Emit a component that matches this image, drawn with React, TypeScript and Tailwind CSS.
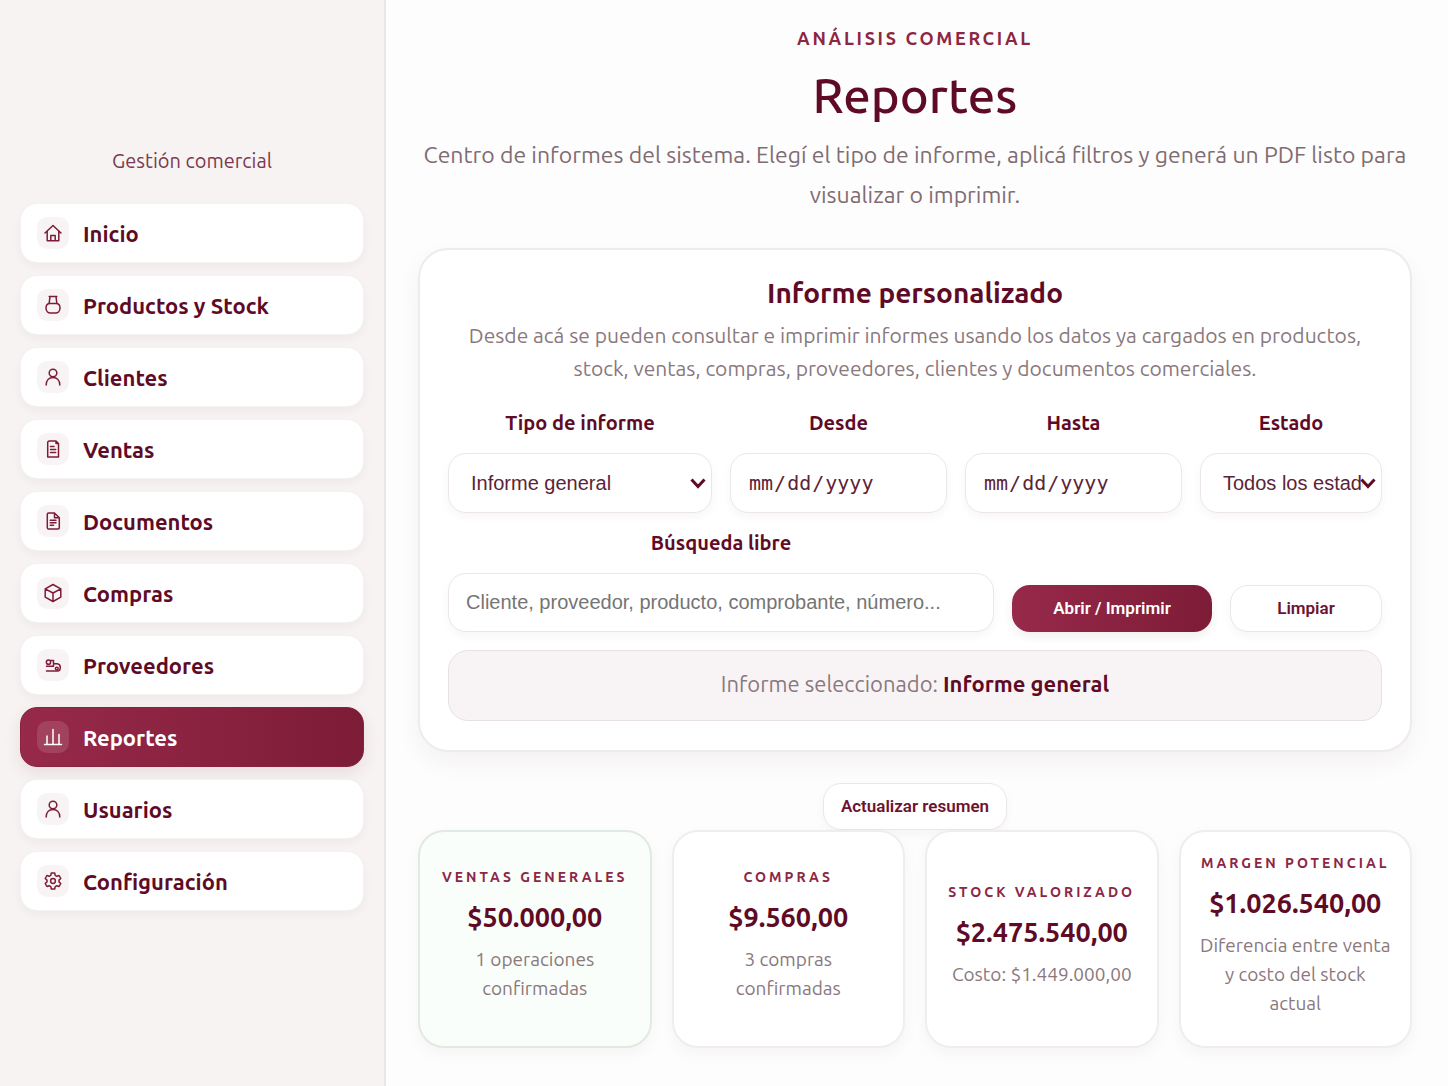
import { useState } from 'react';
import type { ReactNode } from 'react';

const fieldClass =
  'w-full rounded-[18px] border border-[#ece6e8] bg-white shadow-[0_4px_10px_rgba(70,20,35,0.04)] outline-none focus:border-[#8d2643]';

const stats = [
  { label: 'Ventas generales', value: '$50.000,00', note: '1 operaciones confirmadas', highlight: true },
  { label: 'Compras', value: '$9.560,00', note: '3 compras confirmadas' },
  { label: 'Stock valorizado', value: '$2.475.540,00', note: 'Costo: $1.449.000,00' },
  { label: 'Margen potencial', value: '$1.026.540,00', note: 'Diferencia entre venta y costo del stock actual' },
];

const navItems = [
  { label: 'Inicio', icon: <HomeIcon /> },
  { label: 'Productos y Stock', icon: <FlaskIcon /> },
  { label: 'Clientes', icon: <UserIcon /> },
  { label: 'Ventas', icon: <ReceiptIcon /> },
  { label: 'Documentos', icon: <DocumentIcon /> },
  { label: 'Compras', icon: <BoxIcon /> },
  { label: 'Proveedores', icon: <TruckIcon /> },
  { label: 'Reportes', icon: <ChartIcon /> },
  { label: 'Usuarios', icon: <UserIcon /> },
  { label: 'Configuración', icon: <GearIcon /> },
];

function App() {
  return (
    <div className="flex min-h-screen bg-[#fdfdfd] font-['Ubuntu','Noto_Sans',sans-serif] text-[#5f0b26]">
      <Sidebar active="Reportes" />
      <main className="min-w-0 flex-1 pt-6 pr-9 pb-9 pl-8">
        <header className="text-center">
          <p className="text-lg leading-7 font-semibold tracking-[0.15em] text-[#8d2643] uppercase">
            Análisis comercial
          </p>
          <h1 className="mt-[7px] text-[49px] leading-[72px] font-medium">Reportes</h1>
          <p className="mt-1 text-[23px] leading-10 font-normal text-[#7f6c72]">
            Centro de informes del sistema. Elegí el tipo de informe, aplicá filtros y generá un PDF listo para
            visualizar o imprimir.
          </p>
        </header>
        <ReportForm />
        <div className="mt-[31px] flex justify-center">
          <button
            type="button"
            className="h-[47px] rounded-[18px] border border-[#ece6e8] bg-white px-[17px] font-['Liberation_Sans_Narrow','Roboto',sans-serif] text-[17px] font-semibold text-[#6d1330] shadow-[0_4px_10px_rgba(70,20,35,0.04)]"
          >
            Actualizar resumen
          </button>
        </div>
        <section className="grid grid-cols-4 gap-5">
          {stats.map((stat) => (
            <StatCard key={stat.label} {...stat} />
          ))}
        </section>
      </main>
    </div>
  );
}

function Sidebar({ active }: { active: string }) {
  return (
    <aside className="w-[386px] shrink-0 border-r-2 border-[#ebe6e8] bg-[#f7f3f3] px-5 pt-[146px]">
      <p className="text-center text-xl leading-[30px] font-normal text-[#7a3a4e]">Gestión comercial</p>
      <nav className="mt-[27px] flex flex-col gap-3">
        {navItems.map((item) => {
          const isActive = item.label === active;
          return (
            <a
              key={item.label}
              href="#"
              aria-current={isActive ? 'page' : undefined}
              className={`flex h-[60px] items-center gap-[14px] rounded-[17px] border px-4 text-[22px] font-bold ${
                isActive
                  ? 'border-[#862340] bg-linear-to-r from-[#97294a] to-[#7d1c37] text-white shadow-[0_6px_16px_rgba(110,20,50,0.1)]'
                  : 'border-[#f5f0f1] bg-white text-[#5f0b26] shadow-[0_4px_10px_rgba(70,20,35,0.04)]'
              }`}
            >
              <span
                className={`flex size-8 items-center justify-center rounded-[10px] ${
                  isActive ? 'bg-white/12 text-white' : 'bg-[#f8f4f5] text-[#7d1c37]'
                }`}
              >
                {item.icon}
              </span>
              {item.label}
            </a>
          );
        })}
      </nav>
    </aside>
  );
}

function ReportForm() {
  const [type, setType] = useState('Informe general');
  const [status, setStatus] = useState('Todos los estados');

  return (
    <form className="mt-[33px] rounded-[30px] border-2 border-[#efebec] bg-white px-7 pt-[23px] pb-[29px] text-center shadow-[0_10px_24px_rgba(70,20,35,0.05)]">
      <h2 className="text-[28px] leading-10 font-bold">Informe personalizado</h2>
      <p className="mt-[6px] text-[21px] leading-[33px] font-normal text-[#8a787d]">
        Desde acá se pueden consultar e imprimir informes usando los datos ya cargados en productos, stock, ventas,
        compras, proveedores, clientes y documentos comerciales.
      </p>
      <div className="mt-[22px] grid grid-cols-[264fr_217fr_217fr_182fr] gap-[18px]">
        <Field id="type" label="Tipo de informe">
          <Select id="type" value={type} onChange={setType} options={['Informe general', 'Ventas', 'Compras']} />
        </Field>
        <Field id="from" label="Desde">
          <DateInput id="from" />
        </Field>
        <Field id="to" label="Hasta">
          <DateInput id="to" />
        </Field>
        <Field id="status" label="Estado">
          <Select id="status" value={status} onChange={setStatus} options={['Todos los estados', 'Confirmado']} />
        </Field>
      </div>
      <div className="mt-[14px] grid grid-cols-[546fr_200fr_152fr] items-end gap-[18px]">
        <Field id="search" label="Búsqueda libre">
          <input
            id="search"
            type="text"
            placeholder="Cliente, proveedor, producto, comprobante, número..."
            className={`h-[59px] px-[17px] font-['Liberation_Sans',sans-serif] text-xl placeholder:text-[#757575] ${fieldClass}`}
          />
        </Field>
        <button
          type="button"
          className="h-[47px] rounded-[18px] bg-linear-to-r from-[#97294a] to-[#7d1c37] font-['Liberation_Sans_Narrow','Roboto',sans-serif] text-[17px] font-semibold text-white shadow-[0_4px_10px_rgba(70,20,35,0.08)]"
        >
          Abrir / Imprimir
        </button>
        <button
          type="button"
          className="h-[47px] rounded-[18px] border border-[#ece6e8] bg-white font-['Liberation_Sans_Narrow','Roboto',sans-serif] text-[17px] font-semibold text-[#6d1330] shadow-[0_4px_10px_rgba(70,20,35,0.04)]"
        >
          Limpiar
        </button>
      </div>
      <div className="mt-[18px] flex h-[71px] items-center justify-center rounded-[20px] border border-[#e8e1e2] bg-[#f8f4f5] pb-1 text-[22px] font-normal text-[#8a787d]">
        <p>
          Informe seleccionado: <strong className="font-bold text-[#5f0b26]">{type}</strong>
        </p>
      </div>
    </form>
  );
}

function Field({ id, label, children }: { id: string; label: string; children: ReactNode }) {
  return (
    <div className="flex min-w-0 flex-col gap-[14px]">
      <label htmlFor={id} className="text-xl leading-8 font-bold">
        {label}
      </label>
      {children}
    </div>
  );
}

interface SelectProps {
  id: string;
  value: string;
  options: string[];
  onChange: (value: string) => void;
}

function Select({ id, value, options, onChange }: SelectProps) {
  return (
    <div className="relative">
      <select
        id={id}
        value={value}
        onChange={(e) => onChange(e.target.value)}
        className={`h-[60px] appearance-none pr-[18px] pl-[22px] font-['Liberation_Sans',sans-serif] text-xl text-[#5c2436] ${fieldClass}`}
      >
        {options.map((option) => (
          <option key={option}>{option}</option>
        ))}
      </select>
      <svg
        className="pointer-events-none absolute top-[25px] right-[6px] h-[11px] w-4"
        viewBox="0 0 16 11"
        fill="none"
        stroke="#5f0b26"
        strokeWidth={3}
      >
        <path d="M1.5 1.5L8 8.5L14.5 1.5" />
      </svg>
    </div>
  );
}

function DateInput({ id }: { id: string }) {
  return (
    <input
      id={id}
      type="date"
      className={`h-[60px] px-[17px] font-['DejaVu_Sans_Mono',monospace] text-xl text-[#5c2436] [&::-webkit-calendar-picker-indicator]:hidden ${fieldClass}`}
    />
  );
}

interface StatCardProps {
  label: string;
  value: string;
  note: string;
  highlight?: boolean;
}

function StatCard({ label, value, note, highlight }: StatCardProps) {
  return (
    <article
      className={`flex h-[218px] flex-col items-center justify-center rounded-[26px] border-2 px-[18px] pb-[10px] text-center shadow-[0_6px_16px_rgba(70,20,35,0.04)] ${
        highlight ? 'border-[#dfeae2] bg-[#f9fefa]' : 'border-[#f1edee] bg-white'
      }`}
    >
      <h3 className="text-sm leading-6 font-semibold tracking-[3px] whitespace-nowrap text-[#8d2643] uppercase">
        {label}
      </h3>
      <p className="mt-2 text-[27px] leading-10 font-bold">{value}</p>
      <p className="mt-2 text-[19px] leading-[29px] font-normal text-[#8a787d]">{note}</p>
    </article>
  );
}

function Icon({ children }: { children: ReactNode }) {
  return (
    <svg
      className="size-5"
      viewBox="0 0 20 20"
      fill="none"
      stroke="currentColor"
      strokeWidth={1.5}
      strokeLinecap="round"
      strokeLinejoin="round"
    >
      {children}
    </svg>
  );
}

function HomeIcon() {
  return (
    <Icon>
      <path d="M2 10L10 2.5L18 10M4.2 8.2V17.8H15.8V8.2M7.8 17.8V12.5H12.2V17.8" />
    </Icon>
  );
}

function FlaskIcon() {
  return (
    <Icon>
      <path d="M6.2 1.5H13.8M7 1.5L6.2 8.2M13 1.5L13.8 8.2M7 8.5H13C15.5 8.5 17 10.5 17 13C17 16 15 18 12.5 18H7.5C5 18 3 16 3 13C3 10.5 4.5 8.5 7 8.5Z" />
    </Icon>
  );
}

function UserIcon() {
  return (
    <Icon>
      <circle cx="10" cy="6" r="3.8" />
      <path d="M3.2 18C3.2 13.5 6 10.5 10 10.5C14 10.5 16.8 13.5 16.8 18" />
    </Icon>
  );
}

function ReceiptIcon() {
  return (
    <Icon>
      <path d="M6.2 2H13L15.5 4.5V18H4.7V3.5C4.7 2.7 5.3 2 6.2 2ZM13 2V4.5H15.5M7.5 7.5H11M7.5 10.5H12.7M7.5 13.5H12.7" />
    </Icon>
  );
}

function DocumentIcon() {
  return (
    <Icon>
      <path d="M5.5 2H11.5L16.3 6.7V16.8C16.3 17.5 15.8 18 15 18H5.5C4.8 18 4.3 17.5 4.3 16.8V3.2C4.3 2.5 4.8 2 5.5 2ZM11.5 2V6.7H16.3M7.2 9.3H13M7.2 11.8H13M7.2 14.3H10.5" />
    </Icon>
  );
}

function BoxIcon() {
  return (
    <Icon>
      <path d="M10 1.5L17.8 5.8V14.2L10 18.5L2.2 14.2V5.8ZM2.2 5.8L10 10L17.8 5.8M10 10V18.5" />
    </Icon>
  );
}

function TruckIcon() {
  return (
    <Icon>
      <circle cx="5.5" cy="7.2" r="2.1" />
      <path d="M7.6 5.5H10.5V11.3H3.5M10.5 8.8H14.2C16 9 17.3 10.5 17.3 12.5C17.3 14.5 16.5 16 14.5 16H3.5" />
      <circle cx="13.8" cy="13.6" r="1.4" />
    </Icon>
  );
}

function ChartIcon() {
  return (
    <Icon>
      <path d="M1.5 17.5H18.5M4 17.5V9M10 17.5V2.5M16 17.5V7.5" />
    </Icon>
  );
}

function GearIcon() {
  return (
    <Icon>
      <path d="M8.3 2H11.7L12.2 4.4L13.8 5.3L16.1 4.5L17.8 7.5L16 9.1V10.9L17.8 12.5L16.1 15.5L13.8 14.7L12.2 15.6L11.7 18H8.3L7.8 15.6L6.2 14.7L3.9 15.5L2.2 12.5L4 10.9V9.1L2.2 7.5L3.9 4.5L6.2 5.3L7.8 4.4Z" />
      <circle cx="10" cy="10" r="2.4" />
    </Icon>
  );
}

export default App;
